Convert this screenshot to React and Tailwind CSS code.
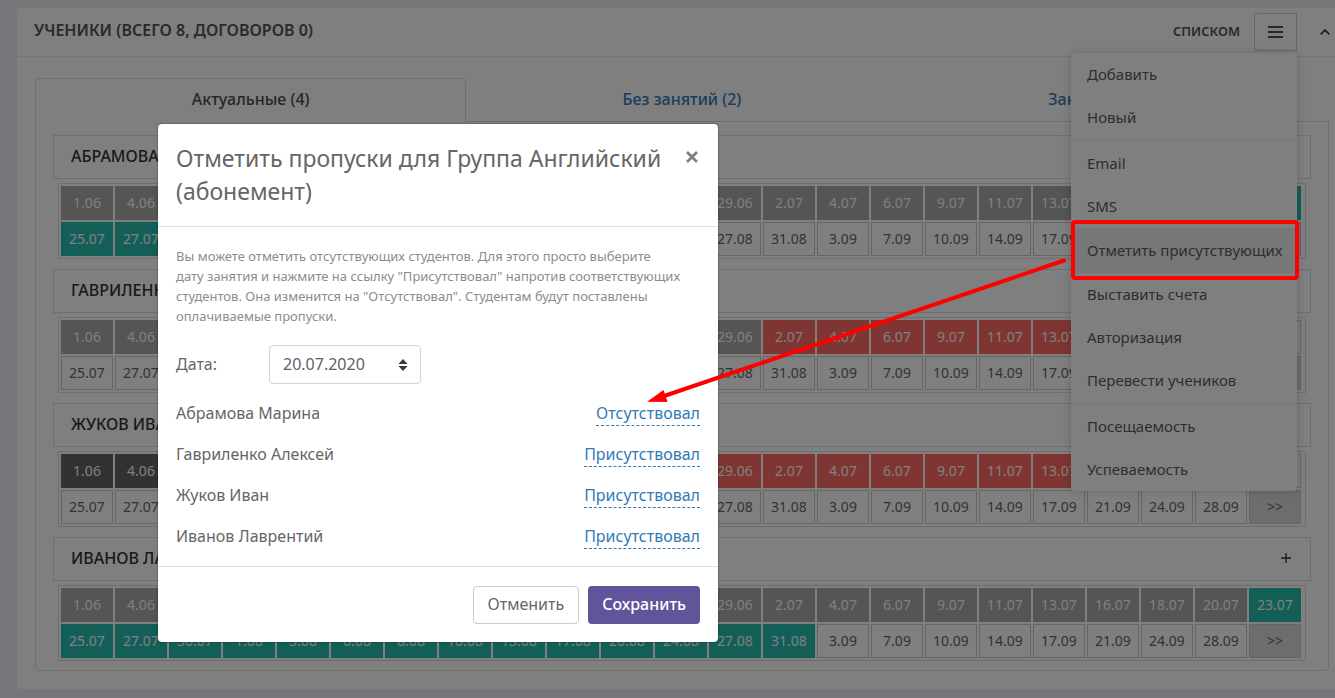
import React from 'react';

const JUNE = ['1.06', '4.06', '6.06', '8.06', '11.06', '13.06', '15.06', '18.06', '20.06', '22.06', '25.06', '27.06', '29.06', '2.07', '4.07', '6.07', '9.07', '11.07', '13.07', '16.07', '18.07', '20.07', '23.07'];
const JULY = ['25.07', '27.07', '30.07', '1.08', '3.08', '6.08', '8.08', '10.08', '13.08', '17.08', '20.08', '24.08', '27.08', '31.08', '3.09', '7.09', '10.09', '14.09', '17.09', '21.09', '24.09', '28.09', '>>'];

const CELL = {
  gray: 'bg-[#aaaaaa] text-white',
  dark: 'bg-[#646464] text-white',
  teal: 'bg-[#26beb0] text-white',
  red: 'bg-[#ff6b62] text-white',
  plain: 'border border-[#cccccc] text-[#666666]',
  more: 'border border-[#cccccc] bg-[#dbdbdb] text-[#666666]',
};

// Each row is a list of [kind, count] runs over the 23 columns.
const STUDENTS = [
  { name: 'АБРАМОВА МАРИНА', first: [['gray', 22], ['teal', 1]], second: [['teal', 3], ['plain', 19], ['more', 1]] },
  { name: 'ГАВРИЛЕНКО АЛЕКСЕЙ', first: [['gray', 13], ['red', 9], ['plain', 1]], second: [['plain', 22], ['more', 1]] },
  { name: 'ЖУКОВ ИВАН', first: [['dark', 4], ['red', 18], ['plain', 1]], second: [['plain', 22], ['more', 1]] },
  { name: 'ИВАНОВ ЛАВРЕНТИЙ', first: [['gray', 22], ['teal', 1]], second: [['teal', 14], ['plain', 8], ['more', 1]] },
];

const expand = (runs) => runs.flatMap(([kind, count]) => Array(count).fill(kind));

function DateRow({ dates, runs }) {
  const kinds = expand(runs);
  return (
    <tr>
      {dates.map((date, i) => (
        <td key={date} className={`h-[34px] p-0 text-center text-sm leading-5 ${CELL[kinds[i]]}`}>{date}</td>
      ))}
    </tr>
  );
}

function Student({ student }) {
  return (
    <section>
      <div className="flex h-11 items-center justify-between border border-[#dcdcdc] px-[17px] pb-0.5 text-base text-[#333333]">
        <h3 className="font-medium">{student.name}</h3>
        <button type="button" aria-label="Развернуть" className="flex w-3.5 justify-center">
          <svg width="12" height="12" viewBox="0 0 12 12" stroke="currentColor" strokeWidth="1.4"><path d="M6 1v10M1 6h10" /></svg>
        </button>
      </div>
      <div className="mx-[5px] mt-1 border border-[#dcdcdc] pr-[2px]">
        <table className="w-full table-fixed border-separate border-spacing-[2px]">
          <tbody>
            <DateRow dates={JUNE} runs={student.first} />
            <DateRow dates={JULY} runs={student.second} />
          </tbody>
        </table>
      </div>
    </section>
  );
}

const MENU = [
  ['Добавить', 'Новый'],
  ['Email', 'SMS', 'Отметить присутствующих', 'Выставить счета', 'Авторизация', 'Перевести учеников'],
  ['Посещаемость', 'Успеваемость'],
];

function Menu() {
  return (
    <div className="absolute right-0 top-10 z-10 w-[226px] rounded-sm bg-white text-[15px] text-[#5c5c5c] shadow-[0_0_10px_rgba(0,0,0,0.2)]">
      {MENU.map((group, i) => (
        <div key={i} className="border-t border-[#ececec] py-px first:border-t-0 first:pt-0 last:pb-0">
          {group.map((item) => (
            <button
              key={item}
              type="button"
              className={`flex w-full items-center whitespace-nowrap px-4 text-left ${item === 'Отметить присутствующих' ? 'h-[45px] bg-[#eeeeee]' : 'h-[43px]'}`}
            >
              {item}
            </button>
          ))}
        </div>
      ))}
    </div>
  );
}

const ATTENDANCE = [
  ['Абрамова Марина', 'Отсутствовал'],
  ['Гавриленко Алексей', 'Присутствовал'],
  ['Жуков Иван', 'Присутствовал'],
  ['Иванов Лаврентий', 'Присутствовал'],
];

function Modal() {
  return (
    <div role="dialog" aria-modal="true" aria-labelledby="dialog-title" className="w-[560px] rounded bg-white text-base text-[#666666] shadow-[0_0_2px_rgba(0,0,0,0.6)]">
      <header className="flex items-start justify-between border-b border-[#dfe0e6] p-[18px]">
        <h2 id="dialog-title" className="text-[23px] leading-[33px]">Отметить пропуски для Группа Английский (абонемент)</h2>
        <button type="button" aria-label="Закрыть" className="flex h-[30px] w-4 shrink-0 items-center justify-center text-[#808080]">
          <svg width="12" height="12" viewBox="0 0 12 12" stroke="currentColor" strokeWidth="2.8"><path d="M1 1l10 10M11 1L1 11" /></svg>
        </button>
      </header>
      <div className="px-[18px] pb-[10px] pt-[19px]">
        <p className="text-[13px] leading-5 text-[#8c8c8c]">
          Вы можете отметить отсутствующих студентов. Для этого просто выберите<br />
          дату занятия и нажмите на ссылку "Присутствовал" напротив соответствующих<br />
          студентов. Она изменится на "Отсутствовал". Студентам будут поставлены<br />
          оплачиваемые пропуски.
        </p>
        <div className="mt-[19px] flex items-center">
          <label htmlFor="lesson-date" className="w-[93px] pb-0.5">Дата:</label>
          <div className="relative">
            <select id="lesson-date" defaultValue="20.07.2020" className="block h-[39px] w-[152px] appearance-none rounded border border-[#ced4da] bg-white pb-0.5 pl-[13px] pr-8 text-base text-[#5c6168]">
              <option>20.07.2020</option>
            </select>
            <svg className="pointer-events-none absolute right-[13px] top-[14px]" width="10" height="12" viewBox="0 0 10 12" fill="#343a40"><path d="M5 0l4.600 5H.4zM5 12L.4 7h9.200z" /></svg>
          </div>
        </div>
        <ul className="mt-2">
          {ATTENDANCE.map(([name, status]) => (
            <li key={name} className="flex h-[41px] items-center justify-between">
              <span>{name}</span>
              <a href="#" className="mt-0.5 border-b border-dashed border-[#337ab7] text-[#337ab7]">{status}</a>
            </li>
          ))}
        </ul>
      </div>
      <footer className="flex justify-end gap-[9px] border-t border-[#dfe0e6] px-[18px] pb-[18px] pt-[19px]">
        <button type="button" className="h-[38px] rounded border border-[#cccccc] px-[14px] pb-0.5">Отменить</button>
        <button type="button" className="h-[38px] rounded bg-[#62549a] px-[14px] pb-0.5 font-medium text-white">Сохранить</button>
      </footer>
    </div>
  );
}

export default function App() {
  return (
    <div className="relative min-h-screen overflow-x-hidden bg-[#ebedf2] pb-[9px] pl-[17px] pt-2 font-['Noto_Sans','Open_Sans',sans-serif]">
      <main className="rounded-l bg-white">
        <header className="flex h-[49px] items-center border-b border-[#ececec] pl-[17px] pr-[5px] text-[#555555]">
          <h1 className="mr-auto pb-1 text-base font-semibold">УЧЕНИКИ (ВСЕГО 8, ДОГОВОРОВ 0)</h1>
          <a href="#" className="mr-[14px] text-[13px] font-semibold">СПИСКОМ</a>
          <div className="relative">
            <button type="button" aria-label="Меню" className="flex h-[38px] w-[43px] items-center justify-center rounded-l border border-[#d0d0d0]">
              <svg width="15" height="13" viewBox="0 0 15 13" fill="#555555"><path d="M0 0h15v2H0zM0 5h15v2H0zM0 10h15v2H0z" /></svg>
            </button>
            <Menu />
          </div>
          <button type="button" aria-label="Свернуть" className="ml-[23px]">
            <svg width="10" height="8" viewBox="0 0 10 8" fill="none" stroke="#444444" strokeWidth="1.8"><path d="M.6 6.400L5 2l4.400 4.400" /></svg>
          </button>
        </header>
        <div className="pb-[18px] pl-[18px] pr-[6px] pt-[21px]">
          <nav className="grid h-11 grid-cols-3 text-base font-medium text-[#337ab7]">
            <a href="#" className="flex items-center justify-center rounded-t border border-b-0 border-[#dcdcdc] pb-[3px] text-[#495057]">Актуальные (4)</a>
            <a href="#" className="flex items-center justify-center border-b border-[#dcdcdc] pb-0.5">Без занятий (2)</a>
            <a href="#" className="flex items-center justify-center border-b border-[#dcdcdc] pb-0.5">Законченные (2)</a>
          </nav>
          <div className="flex flex-col gap-[10px] rounded-b border border-t-0 border-[#dcdcdc] px-[17px] pb-[9px] pt-[13px]">
            {STUDENTS.map((s) => <Student key={s.name} student={s} />)}
          </div>
        </div>
      </main>
      <div className="absolute inset-0 z-20 bg-black/50 pl-[158px] pt-[124px]">
        <Modal />
      </div>
      <div className="pointer-events-none absolute right-9 top-[220px] z-30 h-[60px] w-[228px] rounded-sm border-4 border-[#ff0000]" />
      <svg className="pointer-events-none absolute left-[646px] top-[256px] z-30" width="422" height="148" viewBox="0 0 422 148" fill="#ff0000">
        <path d="M418 4.500L18 140" stroke="#ff0000" strokeWidth="4" strokeLinecap="round" />
        <path d="M1 145.700L17.500 134L21.500 146z" />
      </svg>
    </div>
  );
}
